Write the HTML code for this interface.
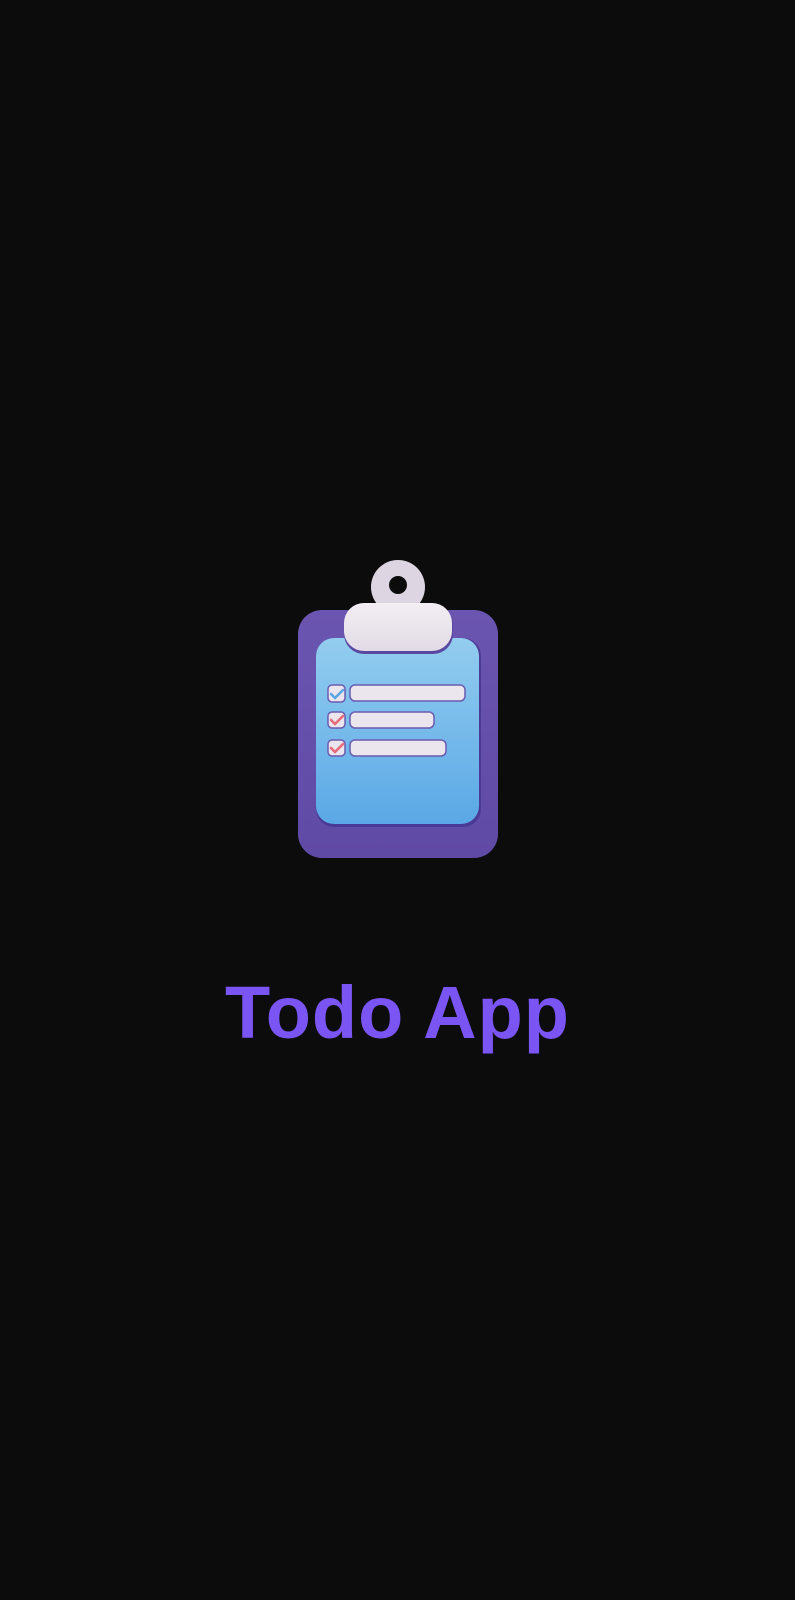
<!DOCTYPE html>
<html><head><style>
html,body{margin:0;padding:0;background:#0c0c0c;width:795px;height:1600px;overflow:hidden}
.t{position:absolute;left:0;width:795px;text-align:center;top:968px;font:bold 74px "Liberation Sans",sans-serif;color:#7b55f4;line-height:90px;margin-left:0px;letter-spacing:1px}
</style></head><body>
<svg width="795" height="1600" style="position:absolute;left:0;top:0">
<defs>
<linearGradient id="b" x1="0" y1="0" x2="0" y2="1"><stop offset="0" stop-color="#6a55b0"/><stop offset="1" stop-color="#5f4aa6"/></linearGradient>
<linearGradient id="p" x1="0" y1="0" x2="0" y2="1"><stop offset="0" stop-color="#93cdef"/><stop offset="1" stop-color="#5aa8e6"/></linearGradient>
<linearGradient id="c" x1="0" y1="0" x2="0" y2="1"><stop offset="0" stop-color="#f3eef3"/><stop offset="1" stop-color="#e2dbe6"/></linearGradient>
</defs>
<rect x="298" y="610" width="200" height="248" rx="24" fill="url(#b)"/>
<rect x="316" y="638" width="165" height="189" rx="18" fill="#4b3a95"/>
<rect x="316" y="638" width="163" height="186" rx="18" fill="url(#p)"/>
<circle cx="398" cy="587" r="27" fill="#ddd6e2"/>
<circle cx="398" cy="585" r="9" fill="#0c0c0c"/>
<rect x="344" y="605" width="109" height="49" rx="20" fill="#5a48a0"/>
<rect x="344" y="603" width="108" height="48" rx="20" fill="url(#c)"/>
<g fill="#ebe5ee" stroke="#6b5bb0" stroke-width="1.5">
<rect x="328" y="685" width="17" height="17" rx="4"/>
<rect x="350" y="685" width="115" height="16" rx="5"/>
<rect x="328" y="712" width="17" height="16" rx="4"/>
<rect x="350" y="712" width="84" height="16" rx="5"/>
<rect x="328" y="740" width="17" height="16" rx="4"/>
<rect x="350" y="740" width="96" height="16" rx="5"/>
</g>
<g fill="none" stroke-width="2.5" stroke-linecap="round">
<path d="M331 694l4 4 8-8" stroke="#5aa6e4"/>
<path d="M331 720l4 4 8-8" stroke="#e66a78"/>
<path d="M331 748l4 4 8-8" stroke="#e66a78"/>
</g>
</svg>
<div class="t">Todo App</div>
</body></html>
